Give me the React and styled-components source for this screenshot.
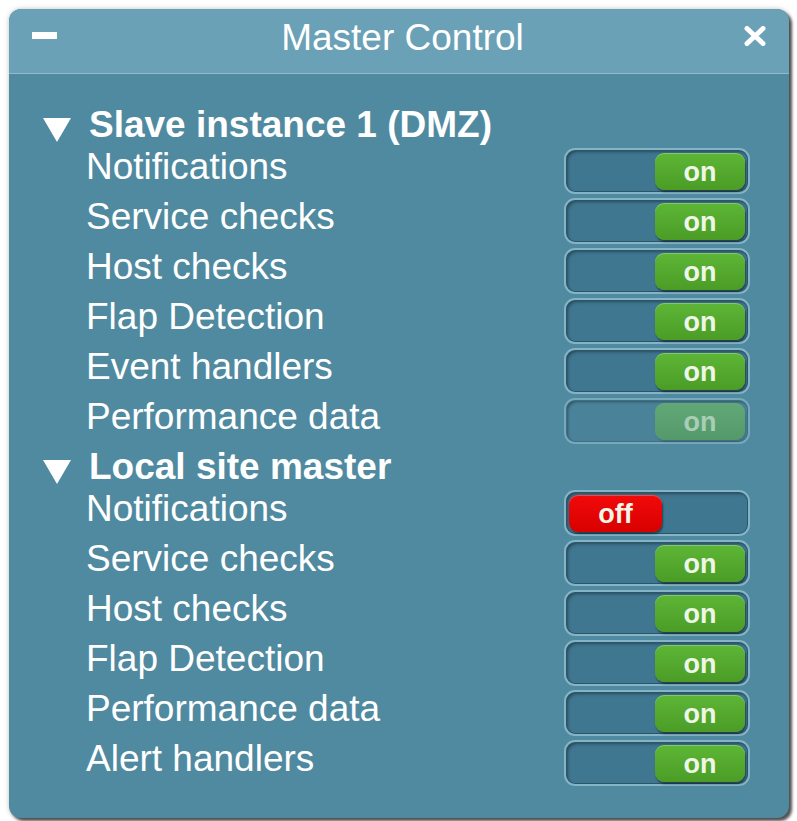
import React from "react";
import styled, { createGlobalStyle } from "styled-components";

const GlobalStyle = createGlobalStyle`
  html, body {
    margin: 0;
    padding: 0;
    background: #ffffff;
  }
  body {
    font-family: "Liberation Sans", Arial, sans-serif;
  }
`;

const Panel = styled.div`
  margin: 9px;
  width: 780px;
  height: 809px;
  border-radius: 12px;
  background: #508aa0;
  overflow: hidden;
  box-shadow: 0 0 5px rgba(0, 0, 0, 0.25), 3px 3px 3px rgba(0, 0, 0, 0.65);
  color: #ffffff;
`;

const TitleBar = styled.div`
  height: 64px;
  display: flex;
  align-items: center;
  justify-content: space-between;
  padding: 0 23px 0 23px;
  background: #6ba1b6;
  border-bottom: 1px solid #8ebdcd;
`;

const Title = styled.div`
  font-size: 37px;
  line-height: 1;
  margin-top: -8px;
  margin-left: 4px;
`;

const Minus = styled.span`
  display: block;
  width: 25px;
  height: 7px;
  background: #ffffff;
  margin-top: -11px;
`;

const CloseIcon = styled.svg`
  width: 22px;
  height: 20px;
  margin-top: -11px;
`;

const Body = styled.div`
  padding: 26px 39px 0 34px;
`;

const SectionHeader = styled.div`
  height: 42px;
  box-sizing: border-box;
  padding-top: 8px;
  display: flex;
  align-items: center;
  gap: 18px;
  font-size: 37px;
  font-weight: bold;
`;

const Triangle = styled.span`
  width: 0;
  height: 0;
  border-left: 14px solid transparent;
  border-right: 14px solid transparent;
  border-top: 24px solid #ffffff;
  margin-top: 10px;
`;

const Row = styled.div`
  height: 50px;
  display: flex;
  align-items: center;
  justify-content: space-between;
  padding-left: 43px;
`;

const Label = styled.span`
  font-size: 37px;
  line-height: 1;
  margin-top: -1px;
`;

const Track = styled.div`
  position: relative;
  width: 186px;
  height: 46px;
  box-sizing: border-box;
  margin-top: 8px;
  border-radius: 11px;
  border: 2px solid ${({ disabled }) => (disabled ? "#78a9bb" : "#84b4c5")};
  background: ${({ disabled }) => (disabled ? "#4a8399" : "#3f7690")};
  box-shadow: inset 0 0 0 1px
      ${({ disabled }) => (disabled ? "#3d7087" : "#2a566a")},
    inset 2px 2px 3px rgba(0, 0, 0, 0.35);
`;

const Knob = styled.div`
  position: absolute;
  top: 3px;
  ${({ on }) => (on ? "right: 3px;" : "left: 3px;")}
  width: ${({ on }) => (on ? "90px" : "93px")};
  height: 37px;
  border-radius: 9px;
  display: flex;
  align-items: center;
  justify-content: center;
  font-size: 27px;
  font-weight: bold;
  line-height: 1;
  padding-top: 2px;
  box-sizing: border-box;
  color: ${({ disabled }) => (disabled ? "#a9cdb6" : "#eef6e8")};
  background: ${({ on, disabled }) =>
    disabled
      ? "linear-gradient(#62a877, #55996a)"
      : on
      ? "linear-gradient(#5db636, #4b9c26)"
      : "linear-gradient(#f20a0a, #d80000)"};
  box-shadow: ${({ disabled }) =>
    disabled
      ? "1px 2px 2px rgba(0,0,0,0.15)"
      : "1px 2px 2px rgba(0,0,0,0.45), inset 0 1px 0 rgba(255,255,255,0.25)"};
`;

const Toggle = ({ on, disabled }) => (
  <Track disabled={disabled}>
    <Knob on={on} disabled={disabled}>
      {on ? "on" : "off"}
    </Knob>
  </Track>
);

const sections = [
  {
    name: "Slave instance 1 (DMZ)",
    items: [
      { label: "Notifications", on: true },
      { label: "Service checks", on: true },
      { label: "Host checks", on: true },
      { label: "Flap Detection", on: true },
      { label: "Event handlers", on: true },
      { label: "Performance data", on: true, disabled: true },
    ],
  },
  {
    name: "Local site master",
    items: [
      { label: "Notifications", on: false },
      { label: "Service checks", on: true },
      { label: "Host checks", on: true },
      { label: "Flap Detection", on: true },
      { label: "Performance data", on: true },
      { label: "Alert handlers", on: true },
    ],
  },
];

export default function App() {
  return (
    <>
      <GlobalStyle />
      <Panel>
        <TitleBar>
          <Minus />
          <Title>Master Control</Title>
          <CloseIcon viewBox="0 0 22 20">
            <path
              d="M3 2.5 L19 17.5 M19 2.5 L3 17.5"
              stroke="#ffffff"
              strokeWidth="5"
              strokeLinecap="round"
            />
          </CloseIcon>
        </TitleBar>
        <Body>
          {sections.map((section) => (
            <div key={section.name}>
              <SectionHeader>
                <Triangle />
                {section.name}
              </SectionHeader>
              {section.items.map((item) => (
                <Row key={item.label}>
                  <Label>{item.label}</Label>
                  <Toggle on={item.on} disabled={item.disabled} />
                </Row>
              ))}
            </div>
          ))}
        </Body>
      </Panel>
    </>
  );
}
